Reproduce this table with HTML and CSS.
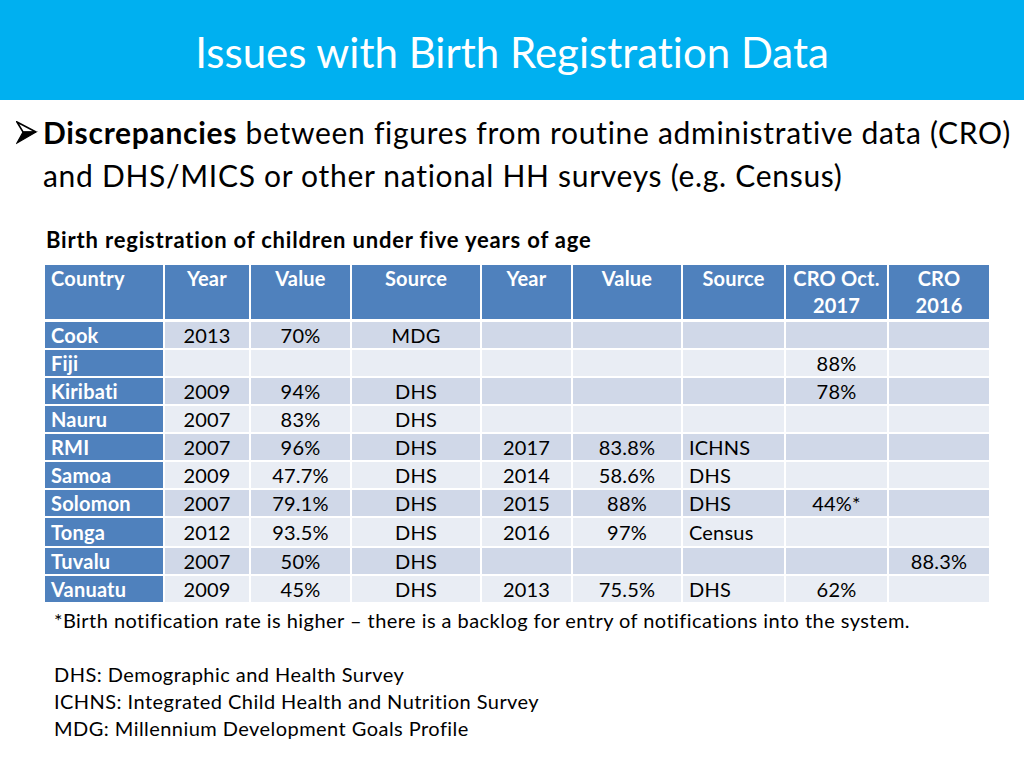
FILE: index.html
```html
<!DOCTYPE html>
<html lang="en">
<head>
<meta charset="utf-8">
<title>Issues with Birth Registration Data</title>
<link rel="stylesheet" href="styles.css">
</head>
<body>
<header class="banner">
  <h1 class="title">Issues with Birth Registration Data</h1>
</header>
<section class="bullets">
  <div class="bullet">
    <svg class="arrow" width="22" height="24" viewBox="0 0 22 24">
      <path d="M1 1 L20 11 L7 11 Z" fill="#fff" stroke="#000" stroke-width="1.6" stroke-linejoin="miter"/>
      <path d="M7 11 L20 11 L1 22 Z" fill="#000" stroke="#000" stroke-width="1.2" stroke-linejoin="miter"/>
    </svg>
    <div class="bullet-text">
      <div class="line"><b>Discrepancies</b> between figures from routine administrative data (CRO)</div>
      <div class="line">and DHS/MICS or other national HH surveys (e.g. Census)</div>
    </div>
  </div>
</section>
<section class="table-block">
  <h2 class="caption">Birth registration of children under five years of age</h2>
  <table class="data">
    <colgroup>
      <col style="width:120px"><col style="width:86px"><col style="width:101px"><col style="width:130px"><col style="width:91px"><col style="width:110px"><col style="width:103px"><col style="width:103px"><col style="width:102px">
    </colgroup>
    <thead>
      <tr>
        <th class="left">Country</th><th>Year</th><th>Value</th><th>Source</th><th>Year</th><th>Value</th><th>Source</th><th>CRO Oct.<br>2017</th><th>CRO<br>2016</th>
      </tr>
    </thead>
    <tbody>
      <tr class="dark"><th class="left">Cook</th><td>2013</td><td>70%</td><td>MDG</td><td></td><td></td><td class="left"></td><td></td><td></td></tr>
      <tr class="light"><th class="left">Fiji</th><td></td><td></td><td></td><td></td><td></td><td class="left"></td><td>88%</td><td></td></tr>
      <tr class="dark"><th class="left">Kiribati</th><td>2009</td><td>94%</td><td>DHS</td><td></td><td></td><td class="left"></td><td>78%</td><td></td></tr>
      <tr class="light"><th class="left">Nauru</th><td>2007</td><td>83%</td><td>DHS</td><td></td><td></td><td class="left"></td><td></td><td></td></tr>
      <tr class="dark"><th class="left">RMI</th><td>2007</td><td>96%</td><td>DHS</td><td>2017</td><td>83.8%</td><td class="left">ICHNS</td><td></td><td></td></tr>
      <tr class="light"><th class="left">Samoa</th><td>2009</td><td>47.7%</td><td>DHS</td><td>2014</td><td>58.6%</td><td class="left">DHS</td><td></td><td></td></tr>
      <tr class="dark"><th class="left">Solomon</th><td>2007</td><td>79.1%</td><td>DHS</td><td>2015</td><td>88%</td><td class="left">DHS</td><td>44%*</td><td></td></tr>
      <tr class="light tall"><th class="left">Tonga</th><td>2012</td><td>93.5%</td><td>DHS</td><td>2016</td><td>97%</td><td class="left">Census</td><td></td><td></td></tr>
      <tr class="dark"><th class="left">Tuvalu</th><td>2007</td><td>50%</td><td>DHS</td><td></td><td></td><td class="left"></td><td></td><td>88.3%</td></tr>
      <tr class="light"><th class="left">Vanuatu</th><td>2009</td><td>45%</td><td>DHS</td><td>2013</td><td>75.5%</td><td class="left">DHS</td><td>62%</td><td></td></tr>
    </tbody>
  </table>
  <div class="notes">
    <p class="note">*Birth notification rate is higher – there is a backlog for entry of notifications into the system.</p>
    <p class="note gap">DHS: Demographic and Health Survey</p>
    <p class="note">ICHNS: Integrated Child Health and Nutrition Survey</p>
    <p class="note">MDG: Millennium Development Goals Profile</p>
  </div>
</section>
</body>
</html>
```

FILE: styles.css
```css
html, body {
  margin: 0;
  padding: 0;
  background: #ffffff;
}
body {
  width: 1024px;
  height: 768px;
  overflow: hidden;
  font-family: Lato, "Open Sans", "Liberation Sans", sans-serif;
  font-variant-ligatures: none;
  color: #000;
}
.banner {
  height: 100px;
  background: #00b0f0;
  display: flex;
  align-items: center;
  justify-content: center;
}
.title {
  margin: 0;
  font-weight: 400;
  font-size: 42px;
  line-height: 50px;
  color: #ffffff;
  padding-top: 4px;
}
.bullets {
  padding: 11px 0 0 16px;
}
.bullet {
  display: flex;
  align-items: flex-start;
}
.arrow {
  margin-top: 10px;
  margin-right: 5px;
  flex: none;
}
.bullet-text {
  font-size: 30px;
  line-height: 43px;
  letter-spacing: 0.7px;
  white-space: nowrap;
}
.table-block {
  padding: 30px 0 0 43px;
}
.caption {
  margin: 0 0 0 3px;
  font-size: 22px;
  font-weight: 700;
  line-height: 26px;
  letter-spacing: 0.82px;
}
.data {
  margin-top: 10px;
  border-collapse: collapse;
  table-layout: fixed;
  width: 946px;
  font-size: 20px;
  letter-spacing: 0.2px;
}
.data th, .data td {
  border: 2px solid #ffffff;
  padding: 0 6px;
  height: 26px;
  line-height: 24px;
  text-align: center;
  vertical-align: middle;
  white-space: nowrap;
  overflow: hidden;
}
.data thead th {
  background: #4f81bd;
  color: #ffffff;
  font-weight: 700;
  vertical-align: top;
  height: 50px;
  line-height: 27px;
  padding-top: 0;
  border-bottom-width: 3px;
}
.data .left {
  text-align: left;
}
.data tbody th {
  background: #4f81bd;
  color: #ffffff;
  font-weight: 700;
}
.data tr.dark td {
  background: #d0d8e8;
}
.data tr.light td {
  background: #e9edf4;
}
.data tr.tall td, .data tr.tall th {
  height: 28px;
}
.notes {
  padding: 3px 0 0 11px;
}
.note {
  margin: 0;
  font-size: 20px;
  line-height: 27px;
  letter-spacing: 0.45px;
}
.note.gap {
  margin-top: 27px;
}
```
